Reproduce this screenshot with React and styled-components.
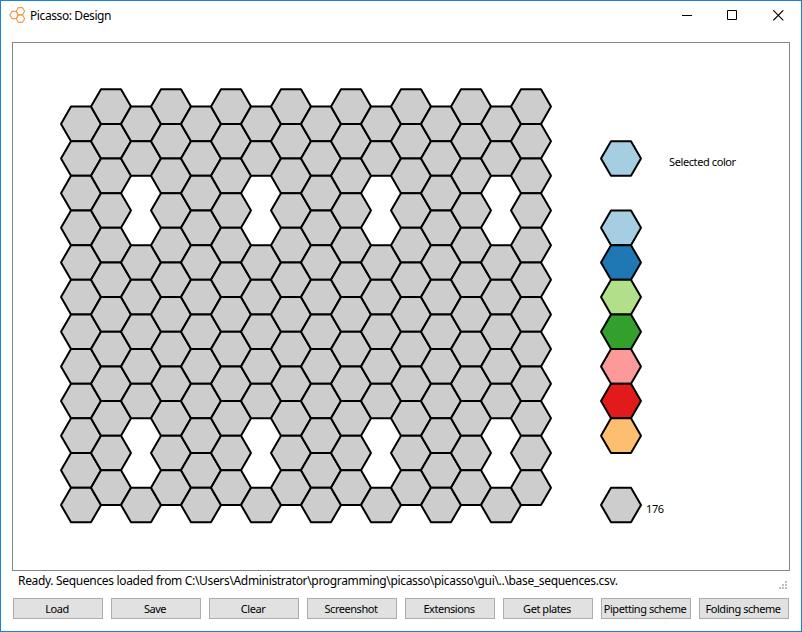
import React from "react";
import styled, { createGlobalStyle } from "styled-components";

const GlobalStyle = createGlobalStyle`
  body { margin: 0; background: #fff; }
  * { box-sizing: border-box; }
`;

const Window = styled.div`
  width: 802px;
  height: 632px;
  display: flex;
  flex-direction: column;
  border: 1px solid #1883d7;
  background: #fff;
  color: #000;
  font-family: "Noto Sans", sans-serif;
  overflow: hidden;
`;

const TitleBar = styled.header`
  flex: none;
  height: 41px;
  display: flex;
  align-items: flex-start;
  padding-left: 8px;
`;

const AppIcon = styled.svg`
  width: 18px;
  height: 18px;
  margin-top: 5px;
`;

const Title = styled.h1`
  flex: 1;
  margin: 0 0 0 3px;
  font-size: 12px;
  line-height: 29px;
  font-weight: 400;
  letter-spacing: -0.4px;
`;

const WindowControls = styled.div`
  display: flex;
`;

const ControlButton = styled.button`
  display: flex;
  align-items: flex-start;
  width: 46px;
  height: 29px;
  padding: 9px 0 0 17px;
  border: 0;
  background: transparent;

  &:first-child { width: 45px; }
  &:last-child { width: 45px; }
`;

const Canvas = styled.main`
  flex: none;
  width: 778px;
  height: 529px;
  margin-left: 11px;
  border: 1px solid #828790;

  svg { display: block; }
`;

const Cell = styled.polygon`
  fill: ${(p) => p.$fill};
  stroke: #000;
  stroke-width: 2;
  stroke-linejoin: bevel;
`;

const CanvasText = styled.text`
  font-size: 11px;
  letter-spacing: -0.4px;
`;

const StatusBar = styled.div`
  flex: none;
  height: 27px;
  width: 778px;
  margin-left: 11px;
  padding-left: 6px;
  display: flex;
  justify-content: space-between;
  align-items: flex-start;
`;

const StatusText = styled.span`
  font-size: 12px;
  line-height: 20px;
  letter-spacing: -0.327px;
  white-space: nowrap;
`;

const Grip = styled.svg`
  width: 8px;
  height: 8px;
  margin: 10px 3px 0 0;
`;

const ButtonRow = styled.footer`
  display: flex;
  gap: 8px;
  padding-left: 12px;
`;

const Button = styled.button`
  width: 90px;
  height: 21px;
  padding: 0;
  border: 1px solid #adadad;
  background: #e1e1e1;
  color: #000;
  font: 11px/19px "Noto Sans", sans-serif;
  letter-spacing: -0.45px;
  text-indent: -2px;
  white-space: nowrap;
`;

const RADIUS = 20;
const HALF = (RADIUS * Math.sqrt(3)) / 2;
const GREY = "#cdcdcd";
const PALETTE = ["#a6cee3", "#1f78b4", "#b2df8a", "#33a02c", "#fb9a99", "#e31a1c", "#fdbf6f"];
const ACTIONS = ["Load", "Save", "Clear", "Screenshot", "Extensions", "Get plates", "Pipetting scheme", "Folding scheme"];

const hexPoints = (col, row) => {
  const x = 81 + col * 1.5 * RADIUS;
  const y = 123.9 + (row * 2 - (col % 2)) * HALF;
  return [[-20, 0], [-10, -HALF], [10, -HALF], [20, 0], [10, HALF], [-10, HALF]]
    .map(([dx, dy]) => `${x + dx},${(y + dy).toFixed(2)}`)
    .join(" ");
};

const isGap = (col, row) => col % 4 === 2 && [2, 3, 9, 10].includes(row);

const cells = [];
for (let col = 0; col < 16; col++)
  for (let row = 0; row < 12; row++)
    if (!isGap(col, row)) cells.push([col, row]);

function OrigamiScene() {
  return (
    <svg width="776" height="527" viewBox="13 43 776 527">
      {cells.map(([col, row]) => (
        <Cell key={`${col}-${row}`} $fill={GREY} points={hexPoints(col, row)} />
      ))}
      <Cell $fill={PALETTE[0]} points={hexPoints(18, 1)} />
      {PALETTE.map((color, i) => (
        <Cell key={color} $fill={color} points={hexPoints(18, 3 + i)} />
      ))}
      <Cell $fill={GREY} points={hexPoints(18, 11)} />
      <CanvasText x="669" y="166">Selected color</CanvasText>
      <CanvasText x="646" y="513">{cells.length}</CanvasText>
    </svg>
  );
}

export default function App() {
  return (
    <>
      <GlobalStyle />
      <Window>
        <TitleBar>
          <AppIcon viewBox="0 0 18 18" fill="none" stroke="#f39c50" strokeWidth="1.15">
            <path d="M.8 9 3 5.4h4.2L9.2 9l-2 3.6H3Z" />
            <path d="M7.3 5.2 9.3 1.6h4.2l2.1 3.6-2.1 3.7H9.3Z" />
            <path d="M7.3 12.7l2-3.8h4.2l2.1 3.8-2.1 3.7H9.3Z" />
          </AppIcon>
          <Title>Picasso: Design</Title>
          <WindowControls>
            <ControlButton aria-label="Minimize">
              <svg width="11" height="11" stroke="#000"><path d="M0 5.5h10" /></svg>
            </ControlButton>
            <ControlButton aria-label="Maximize">
              <svg width="11" height="11" fill="none" stroke="#000"><path d="M.5.5h9v9h-9Z" /></svg>
            </ControlButton>
            <ControlButton aria-label="Close">
              <svg width="11" height="11" stroke="#000" strokeWidth="1.1"><path d="m.3.3 10 10m0-10-10 10" /></svg>
            </ControlButton>
          </WindowControls>
        </TitleBar>
        <Canvas>
          <OrigamiScene />
        </Canvas>
        <StatusBar>
          <StatusText>{"Ready. Sequences loaded from C:\\Users\\Administrator\\programming\\picasso\\picasso\\gui\\..\\base_sequences.csv."}</StatusText>
          <Grip fill="#bfbfbf">
            <path d="M6 0h2v2H6ZM3 3h2v2H3ZM6 3h2v2H6ZM0 6h2v2H0ZM3 6h2v2H3ZM6 6h2v2H6Z" />
          </Grip>
        </StatusBar>
        <ButtonRow>
          {ACTIONS.map((label) => (
            <Button key={label}>{label}</Button>
          ))}
        </ButtonRow>
      </Window>
    </>
  );
}
